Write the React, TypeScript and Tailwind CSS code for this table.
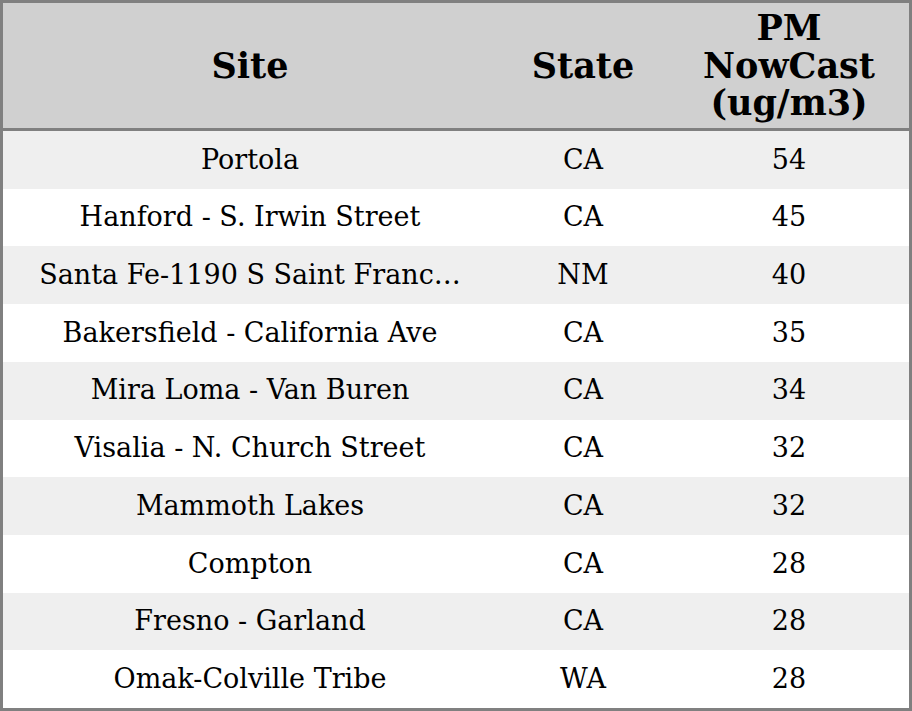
const rows = [
  { site: 'Portola', state: 'CA', pm: 54 },
  { site: 'Hanford - S. Irwin Street', state: 'CA', pm: 45 },
  { site: 'Santa Fe-1190 S Saint Franc…', state: 'NM', pm: 40 },
  { site: 'Bakersfield - California Ave', state: 'CA', pm: 35 },
  { site: 'Mira Loma - Van Buren', state: 'CA', pm: 34 },
  { site: 'Visalia - N. Church Street', state: 'CA', pm: 32 },
  { site: 'Mammoth Lakes', state: 'CA', pm: 32 },
  { site: 'Compton', state: 'CA', pm: 28 },
  { site: 'Fresno - Garland', state: 'CA', pm: 28 },
  { site: 'Omak-Colville Tribe', state: 'WA', pm: 28 },
]

export default function App() {
  return (
    <div className="w-[912px] h-[711px] bg-white font-['DejaVu_Serif',serif] text-black">
      <div className="border-[3px] border-[#808080] h-full flex flex-col">
        <div className="grid grid-cols-[494px_172px_240px] h-[128px] shrink-0 bg-[#d0d0d0] border-b-[3px] border-[#808080] font-bold text-[35px] leading-[37.5px]">
          <div className="flex items-center justify-center">Site</div>
          <div className="flex items-center justify-center">State</div>
          <div className="flex items-center justify-center text-center">
            PM<br />NowCast<br />(ug/m3)
          </div>
        </div>
        {rows.map((r, i) => (
          <div
            key={i}
            className={`grid grid-cols-[494px_172px_240px] flex-1 text-[27px] ${i % 2 === 0 ? 'bg-[#efefef]' : 'bg-white'}`}
          >
            <div className="flex items-center justify-center whitespace-nowrap">{r.site}</div>
            <div className="flex items-center justify-center">{r.state}</div>
            <div className="flex items-center justify-center">{r.pm}</div>
          </div>
        ))}
      </div>
    </div>
  )
}
